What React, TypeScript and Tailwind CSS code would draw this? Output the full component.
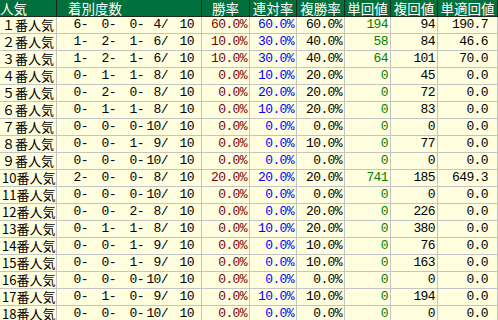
import React from 'react';

type Row = {
  label: string;
  fin: [string, string, string, string];
  win: string;
  ren: string;
  fuku: string;
  tan: string;
  fukuVal: string;
  tekiVal: string;
};

const rows: Row[] = [
  { label: '１番人気', fin: ['6', '0', '0', '4'], win: '60.0%', ren: '60.0%', fuku: '60.0%', tan: '194', fukuVal: '94', tekiVal: '190.7' },
  { label: '２番人気', fin: ['1', '2', '1', '6'], win: '10.0%', ren: '30.0%', fuku: '40.0%', tan: '58', fukuVal: '84', tekiVal: '46.6' },
  { label: '３番人気', fin: ['1', '2', '1', '6'], win: '10.0%', ren: '30.0%', fuku: '40.0%', tan: '64', fukuVal: '101', tekiVal: '70.0' },
  { label: '４番人気', fin: ['0', '1', '1', '8'], win: '0.0%', ren: '10.0%', fuku: '20.0%', tan: '0', fukuVal: '45', tekiVal: '0.0' },
  { label: '５番人気', fin: ['0', '2', '0', '8'], win: '0.0%', ren: '20.0%', fuku: '20.0%', tan: '0', fukuVal: '72', tekiVal: '0.0' },
  { label: '６番人気', fin: ['0', '1', '1', '8'], win: '0.0%', ren: '10.0%', fuku: '20.0%', tan: '0', fukuVal: '83', tekiVal: '0.0' },
  { label: '７番人気', fin: ['0', '0', '0', '10'], win: '0.0%', ren: '0.0%', fuku: '0.0%', tan: '0', fukuVal: '0', tekiVal: '0.0' },
  { label: '８番人気', fin: ['0', '0', '1', '9'], win: '0.0%', ren: '0.0%', fuku: '10.0%', tan: '0', fukuVal: '77', tekiVal: '0.0' },
  { label: '９番人気', fin: ['0', '0', '0', '10'], win: '0.0%', ren: '0.0%', fuku: '0.0%', tan: '0', fukuVal: '0', tekiVal: '0.0' },
  { label: '10番人気', fin: ['2', '0', '0', '8'], win: '20.0%', ren: '20.0%', fuku: '20.0%', tan: '741', fukuVal: '185', tekiVal: '649.3' },
  { label: '11番人気', fin: ['0', '0', '0', '10'], win: '0.0%', ren: '0.0%', fuku: '0.0%', tan: '0', fukuVal: '0', tekiVal: '0.0' },
  { label: '12番人気', fin: ['0', '0', '2', '8'], win: '0.0%', ren: '0.0%', fuku: '20.0%', tan: '0', fukuVal: '226', tekiVal: '0.0' },
  { label: '13番人気', fin: ['0', '1', '1', '8'], win: '0.0%', ren: '10.0%', fuku: '20.0%', tan: '0', fukuVal: '380', tekiVal: '0.0' },
  { label: '14番人気', fin: ['0', '0', '1', '9'], win: '0.0%', ren: '0.0%', fuku: '10.0%', tan: '0', fukuVal: '76', tekiVal: '0.0' },
  { label: '15番人気', fin: ['0', '0', '1', '9'], win: '0.0%', ren: '0.0%', fuku: '10.0%', tan: '0', fukuVal: '163', tekiVal: '0.0' },
  { label: '16番人気', fin: ['0', '0', '0', '10'], win: '0.0%', ren: '0.0%', fuku: '0.0%', tan: '0', fukuVal: '0', tekiVal: '0.0' },
  { label: '17番人気', fin: ['0', '1', '0', '9'], win: '0.0%', ren: '10.0%', fuku: '10.0%', tan: '0', fukuVal: '194', tekiVal: '0.0' },
  { label: '18番人気', fin: ['0', '0', '0', '10'], win: '0.0%', ren: '0.0%', fuku: '0.0%', tan: '0', fukuVal: '0', tekiVal: '0.0' },
];

const cols = 'grid grid-cols-[57px_145px_48px_47px_48px_46px_47px_60px]';
const jp = "font-['Noto_Sans_CJK_JP','Noto_Sans_CJK_SC',sans-serif]";
const num = "font-['Liberation_Mono','DejaVu_Sans_Mono',monospace] text-[13px] tracking-[-0.6px]";
const head = `h-[16px] flex items-center justify-center text-white text-[13.5px] leading-[16px] border-r border-[#1c2a20] ${jp}`;
const cell = 'h-[17px] flex items-center leading-[16px] border-r border-b border-[#c4c4c4]';

export default function App() {
  return (
    <div className="w-[498px] h-[320px] overflow-hidden bg-[#ffffe0]">
      <div className={`${cols} bg-[#00703c] border-b border-[#1c2a20]`}>
        <div className={`${head} !justify-start`}>人気</div>
        <div className={`${head} !justify-start pl-[11px]`}>着別度数</div>
        <div className={head}>勝率</div>
        <div className={head}>連対率</div>
        <div className={head}>複勝率</div>
        <div className={head}>単回値</div>
        <div className={head}>複回値</div>
        <div className={head}>単適回値</div>
      </div>
      {rows.map((r) => (
        <div key={r.label} className={cols}>
          <div className={`${cell} pl-[2px] text-[13px] text-black ${jp}`}>{r.label}</div>
          <div className={`${cell} ${num} text-black`}>
            <span className="w-[31px] text-right">{r.fin[0]}-</span>
            <span className="w-[28px] text-right">{r.fin[1]}-</span>
            <span className="w-[28px] text-right">{r.fin[2]}-</span>
            <span className="w-[24px] text-right">{r.fin[3]}/</span>
            <span className="w-[26px] text-right">10</span>
          </div>
          <div className={`${cell} ${num} justify-end pr-[2px] text-[#800000]`}>{r.win}</div>
          <div className={`${cell} ${num} justify-end pr-[2px] text-[#0000ff]`}>{r.ren}</div>
          <div className={`${cell} ${num} justify-end pr-[2px] text-black`}>{r.fuku}</div>
          <div className={`${cell} ${num} justify-end pr-[2px] text-[#008000]`}>{r.tan}</div>
          <div className={`${cell} ${num} justify-end pr-[2px] text-black`}>{r.fukuVal}</div>
          <div className={`${cell} ${num} justify-end pr-[9px] text-black`}>{r.tekiVal}</div>
        </div>
      ))}
    </div>
  );
}
